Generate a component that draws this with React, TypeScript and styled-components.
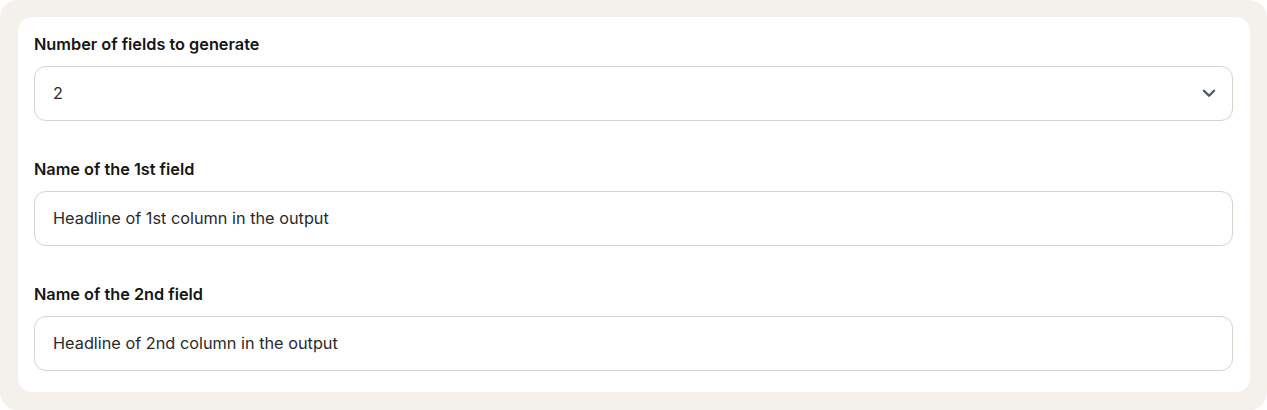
import styled, { createGlobalStyle } from "styled-components";

const GlobalStyle = createGlobalStyle`
  html, body {
    margin: 0;
    padding: 0;
    background: #ffffff;
  }
  * {
    box-sizing: border-box;
  }
`;

const fields = [
  { label: "Name of the 1st field", value: "Headline of 1st column in the output" },
  { label: "Name of the 2nd field", value: "Headline of 2nd column in the output" },
];

export default function App() {
  return (
    <>
      <GlobalStyle />
      <Outer>
        <Card>
          <Group>
            <Label>Number of fields to generate</Label>
            <SelectBox>
              <span>2</span>
              <svg width="22" height="22" viewBox="0 0 24 24" fill="none">
                <path
                  d="M6.5 9.5l5.5 5.5 5.5-5.5"
                  stroke="#4b5563"
                  strokeWidth="2.5"
                  strokeLinecap="round"
                  strokeLinejoin="round"
                />
              </svg>
            </SelectBox>
          </Group>
          {fields.map((f) => (
            <Group key={f.label}>
              <Label>{f.label}</Label>
              <Input readOnly value={f.value} />
            </Group>
          ))}
        </Card>
      </Outer>
    </>
  );
}

const Outer = styled.div`
  width: 1267px;
  height: 410px;
  background-color: #f4f0ec;
  border-radius: 18px;
  padding: 17px 17px 18px 18px;
`;

const Card = styled.div`
  background-color: #ffffff;
  border-radius: 14px;
  height: 375px;
  padding: 17px 17px 21px 16px;
  display: flex;
  flex-direction: column;
  gap: 38px;
`;

const Group = styled.div`
  display: flex;
  flex-direction: column;
  gap: 12px;
`;

const Label = styled.label`
  font-family: Inter, "Noto Sans", sans-serif;
  font-weight: 600;
  font-size: 16.3px;
  line-height: 20px;
  color: #161616;
`;

const fieldBase = `
  height: 55px;
  width: 100%;
  border: 1px solid #d9d2cb;
  border-radius: 12px;
  background: #ffffff;
  font-family: Inter, "Noto Sans", sans-serif;
  font-size: 16.3px;
  color: #2a2a2a;
`;

const SelectBox = styled.div`
  ${fieldBase}
  display: flex;
  align-items: center;
  justify-content: space-between;
  padding: 0 12px 2px 18px;
`;

const Input = styled.input`
  ${fieldBase}
  padding: 0 18px 2px;
  outline: none;
`;
